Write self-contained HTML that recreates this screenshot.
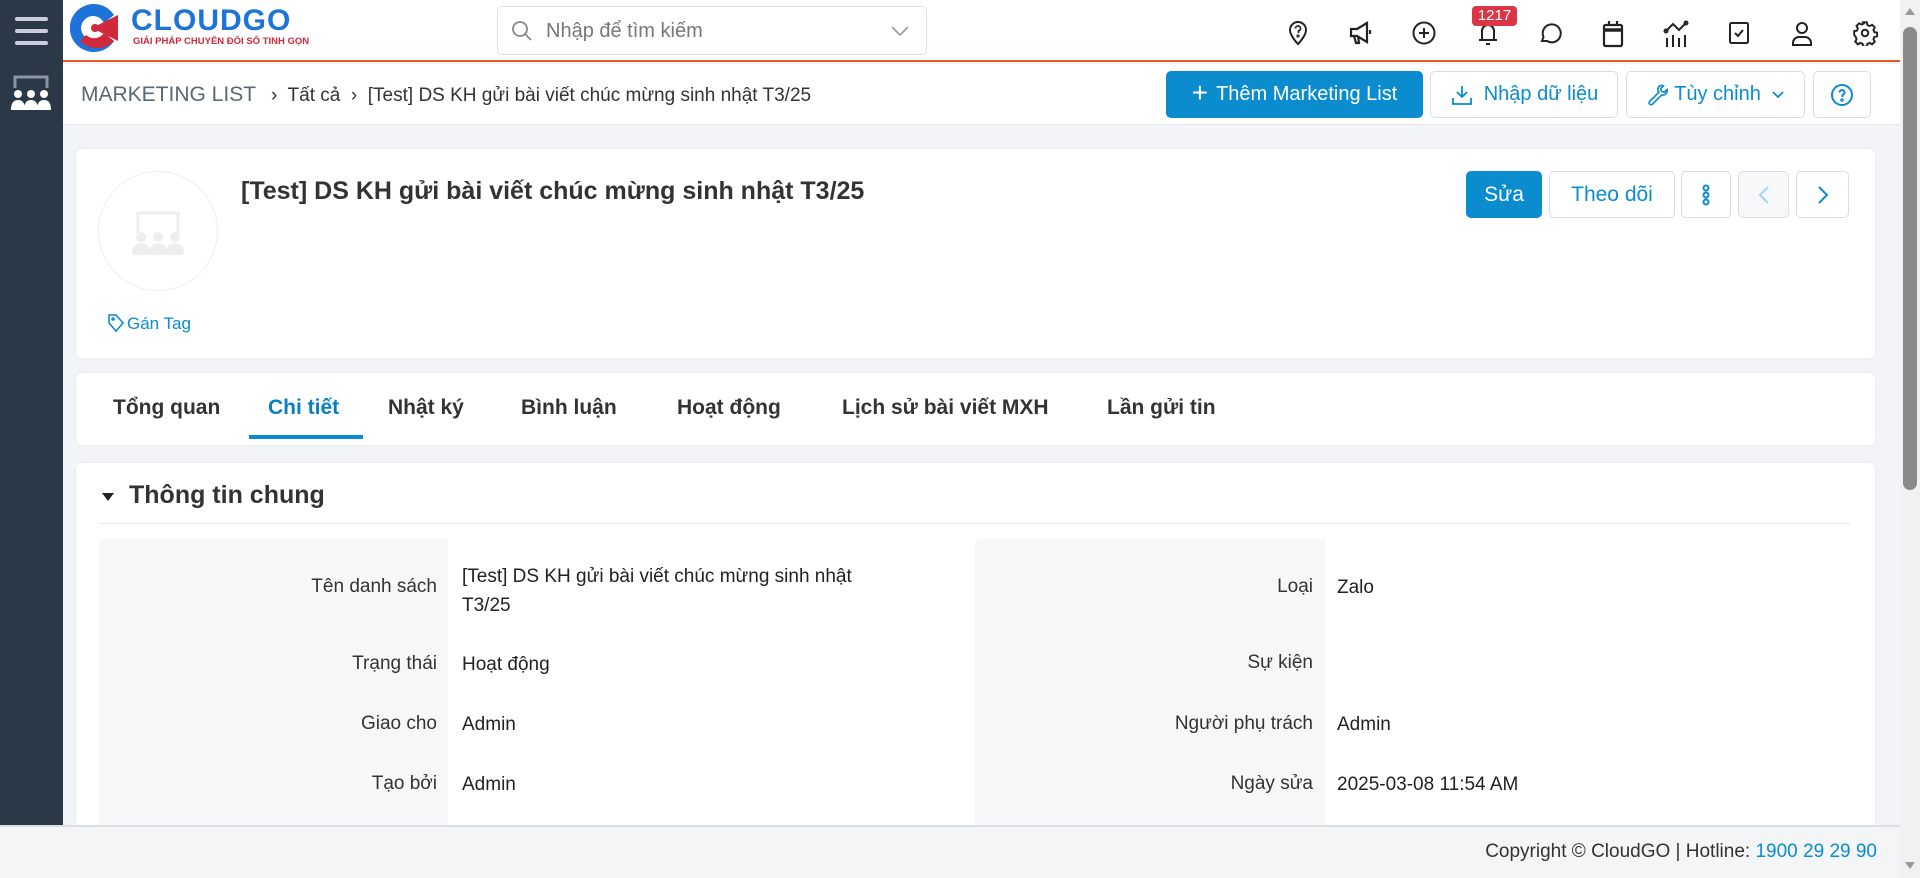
<!DOCTYPE html>
<html><head><meta charset="utf-8">
<style>
*{box-sizing:border-box;margin:0;padding:0}
body{width:1920px;height:878px;overflow:hidden;background:#f2f4f7;font-family:"Liberation Sans","Noto Sans CJK SC",sans-serif;color:#222;position:relative}
.abs{position:absolute}
#side{left:0;top:0;width:63px;height:825px;background:#2a3847}
#top{left:63px;top:0;width:1837px;height:62px;background:#fff;border-bottom:2px solid #e35b2a}
#bc{left:63px;top:64px;width:1837px;height:61px;background:#fff;border-bottom:1px solid #e4e7ea}
.btn{position:absolute;border:1px solid #d9dde1;border-radius:5px;background:#fff;color:#0a8ccf;font-size:20px;display:flex;align-items:center;justify-content:center}
.card{position:absolute;background:#fff;border-radius:6px;box-shadow:0 0 3px rgba(0,0,0,.06)}
.ic{position:absolute;top:20px}
.lbl{position:absolute;text-align:right;font-size:19px;color:#333}
.val{position:absolute;font-size:19px;color:#222}
.tab{position:absolute;top:396px;font-size:21px;font-weight:bold;color:#333}
#foot{left:0;top:825px;width:1900px;height:53px;background:#f4f5f6;border-top:2px solid #dcdfe2}
#sb{left:1900px;top:0;width:20px;height:878px;background:#f1f1f1}
</style></head><body>
<div id="side" class="abs">
 <div class="abs" style="left:15px;top:17px;width:33px;height:4px;background:#ccd;border-radius:2px"></div>
 <div class="abs" style="left:15px;top:29px;width:33px;height:4px;background:#ccd;border-radius:2px"></div>
 <div class="abs" style="left:15px;top:41px;width:33px;height:4px;background:#ccd;border-radius:2px"></div>
 <svg class="abs" style="left:9px;top:74px" width="44" height="38" viewBox="0 0 44 38"><path d="M6 14V3h32v11" fill="none" stroke="#8a96a3" stroke-width="3"/><g fill="#fff"><circle cx="9" cy="20" r="4"/><circle cx="22" cy="20" r="4"/><circle cx="35" cy="20" r="4"/><path d="M2 36q0-10 7-10t7 10zM15 36q0-10 7-10t7 10zM28 36q0-10 7-10t7 10z"/></g></svg>
</div>
<div id="top" class="abs">
 <svg class="abs" style="left:7px;top:3px" width="50" height="50" viewBox="0 0 50 50"><path d="M44 12A24 24 0 1 0 44 38L34 30A12 12 0 1 1 34 20Z" fill="#1e73d8"/><path d="M22 25L48 12V38Z" fill="#d0293a"/><path d="M10 38A24 24 0 0 0 44 38L34 30A12 12 0 0 1 16 32Z" fill="#d0293a"/><circle cx="25" cy="25" r="4" fill="#d0293a"/></svg>
 <div class="abs" style="left:68px;top:4px;font-size:30px;font-weight:bold;color:#1e73d8;letter-spacing:1px">CLOUDGO</div>
 <div class="abs" style="left:70px;top:36px;font-size:9.5px;font-weight:bold;color:#d0293a">GIẢI PHÁP CHUYỂN ĐỔI SỐ TINH GỌN</div>
 <div class="abs" style="left:434px;top:6px;width:430px;height:49px;border:1px solid #dde0e3;border-radius:5px">
  <svg class="abs" style="left:12px;top:12px" width="24" height="24" viewBox="0 0 24 24" fill="none" stroke="#888" stroke-width="1.8"><circle cx="10" cy="10" r="7"/><path d="M15 15l6 6"/></svg>
  <div class="abs" style="left:48px;top:13px;font-size:20px;color:#777">Nhập để tìm kiếm</div>
  <svg class="abs" style="left:392px;top:17px" width="20" height="14" viewBox="0 0 20 14" fill="none" stroke="#999" stroke-width="1.6"><path d="M2 3l8 8 8-8"/></svg>
 </div>
 <svg class="ic" style="left:1223px" width="24" height="26" viewBox="0 0 24 26" fill="none" stroke="#222" stroke-width="2"><path d="M12 24s-8-8-8-14a8 8 0 0 1 16 0c0 6-8 14-8 14z"/><path d="M9.5 8.5a2.5 2.5 0 1 1 3 2.4V13" stroke-width="1.7"/><circle cx="12" cy="16" r=".6"/></svg>
 <svg class="ic" style="left:1285px" width="26" height="26" viewBox="0 0 26 26" fill="none" stroke="#222" stroke-width="2.2"><path d="M3 9h6l10-6v19l-10-6H3z"/><path d="M6 16l2 7h3l-1-7"/><path d="M22 10v4"/></svg>
 <svg class="ic" style="left:1348px" width="26" height="26" viewBox="0 0 26 26" fill="none" stroke="#222" stroke-width="2"><circle cx="13" cy="13" r="10.5"/><path d="M13 8v10M8 13h10"/></svg>
 <svg class="ic" style="left:1412px" width="26" height="28" viewBox="0 0 26 28" fill="none" stroke="#222" stroke-width="2"><path d="M7 20V11a6 6 0 0 1 12 0v9M4 20h18"/><path d="M11 24h4"/></svg>
 <div class="abs" style="left:1409px;top:6px;width:45px;height:20px;background:#dc3545;border-radius:4px;color:#fff;font-size:15px;text-align:center;line-height:20px">1217</div>
 <svg class="ic" style="left:1474px" width="26" height="26" viewBox="0 0 26 26" fill="none" stroke="#222" stroke-width="2"><path d="M5 21l1.5-4A9 9 0 1 1 10 21z"/></svg>
 <svg class="ic" style="left:1538px" width="24" height="28" viewBox="0 0 24 28" fill="none" stroke="#222" stroke-width="2.2"><rect x="3" y="5" width="18" height="21" rx="1.5"/><path d="M3 10h18" stroke-width="3.5"/><path d="M8 1v5M16 1v5"/></svg>
 <svg class="ic" style="left:1600px" width="28" height="28" viewBox="0 0 28 28" fill="none" stroke="#222" stroke-width="2"><path d="M4 27v-9M10 27v-12M16 27v-9M22 27v-12"/><path d="M3 11l7-7 6 6 7-7"/><circle cx="3" cy="11" r="1.5"/><circle cx="23" cy="3" r="1.5"/></svg>
 <svg class="ic" style="left:1664px" width="24" height="26" viewBox="0 0 24 26" fill="none" stroke="#222" stroke-width="2"><rect x="3" y="3" width="18" height="20" rx="1.5"/><path d="M8 13l3 3 5-6"/></svg>
 <svg class="ic" style="left:1726px" width="26" height="28" viewBox="0 0 26 28" fill="none" stroke="#222" stroke-width="2"><circle cx="13" cy="8" r="5"/><path d="M4 25v-2a6 6 0 0 1 6-6h6a6 6 0 0 1 6 6v2z"/></svg>
 <svg class="ic" style="left:1789px" width="26" height="26" viewBox="0 0 24 24" fill="none" stroke="#222" stroke-width="1.8"><circle cx="12" cy="12" r="3"/><path d="M10.3 2h3.4l.5 2.6 2 1 2.4-1.2 2.4 2.4-1.2 2.4.8 2 2.6.5v3.4l-2.6.5-.8 2 1.2 2.4-2.4 2.4-2.4-1.2-2 .8-.5 2.6h-3.4l-.5-2.6-2-.8-2.4 1.2-2.4-2.4 1.2-2.4-.8-2L2 13.7v-3.4l2.6-.5.8-2-1.2-2.4 2.4-2.4 2.4 1.2 2-1z"/></svg>
</div>
<div id="bc" class="abs">
 <div class="abs" style="left:18px;top:19px;font-size:21px;color:#5b6873">MARKETING LIST</div>
 <div class="abs" style="left:208px;top:21px;font-size:19px;color:#333">›&nbsp; Tất cả &nbsp;›&nbsp; [Test] DS KH gửi bài viết chúc mừng sinh nhật T3/25</div>
 <div class="btn" style="left:1103px;top:7px;width:257px;height:47px;background:#0a8ccf;border-color:#0a8ccf;color:#fff"><span style="font-size:28px;font-weight:300;margin-right:8px;margin-top:-4px">+</span>Thêm Marketing List</div>
 <div class="btn" style="left:1367px;top:7px;width:188px;height:47px"><svg width="24" height="24" viewBox="0 0 24 24" fill="none" stroke="#0a8ccf" stroke-width="1.8" style="margin-right:10px"><path d="M12 3v11M7 9l5 5 5-5M3 15v6h18v-6"/></svg>Nhập dữ liệu</div>
 <div class="btn" style="left:1563px;top:7px;width:179px;height:47px"><svg width="22" height="22" viewBox="0 0 24 24" fill="none" stroke="#0a8ccf" stroke-width="1.8" style="margin-right:6px"><path d="M15 2a5 5 0 0 0-1 7l-10 10a2 2 0 0 0 3 3l10-10a5 5 0 0 0 6-6l-3 3-3-1-1-3 3-3a5 5 0 0 0-4 0z"/></svg>Tùy chỉnh<svg width="14" height="10" viewBox="0 0 14 10" fill="none" stroke="#0a8ccf" stroke-width="1.8" style="margin-left:10px"><path d="M2 2l5 5 5-5"/></svg></div>
 <div class="btn" style="left:1750px;top:7px;width:58px;height:47px"><svg width="24" height="24" viewBox="0 0 24 24" fill="none" stroke="#0a8ccf" stroke-width="2"><circle cx="12" cy="12" r="10"/><path d="M9.5 9.5a2.5 2.5 0 1 1 3 2.4V14"/><circle cx="12" cy="17" r=".8"/></svg></div>
</div>

<div class="card" style="left:76px;top:149px;width:1799px;height:209px">
 <div class="abs" style="left:22px;top:22px;width:120px;height:120px;border-radius:50%;border:1px solid #eee"></div>
 <svg class="abs" style="left:52px;top:58px" width="60" height="50" viewBox="0 0 60 50"><path d="M10 26V6h40v20" fill="none" stroke="#eee" stroke-width="3"/><g fill="#eee"><circle cx="13" cy="30" r="5"/><circle cx="30" cy="30" r="5"/><circle cx="47" cy="30" r="5"/><path d="M4 48q0-12 9-12t9 12zM21 48q0-12 9-12t9 12zM38 48q0-12 9-12t9 12z"/></g></svg>
 <svg class="abs" style="left:31px;top:164px" width="18" height="20" viewBox="0 0 18 20" fill="none" stroke="#0a8ccf" stroke-width="1.6"><path d="M2 2h7l7 8-7 8-7-8z"/><circle cx="6" cy="6" r="1"/></svg>
 <div class="abs" style="left:51px;top:165px;font-size:17px;color:#0a8ccf">Gán Tag</div>
 <div class="abs" style="left:165px;top:28px;font-size:25px;font-weight:bold;color:#333">[Test] DS KH gửi bài viết chúc mừng sinh nhật T3/25</div>
 <div class="btn" style="left:1390px;top:22px;width:76px;height:47px;background:#0a8ccf;border-color:#0a8ccf;color:#fff;font-size:21px">Sửa</div>
 <div class="btn" style="left:1473px;top:22px;width:126px;height:47px;font-size:21px">Theo dõi</div>
 <div class="btn" style="left:1605px;top:22px;width:50px;height:47px"><svg width="10" height="24" viewBox="0 0 10 24" fill="none" stroke="#0a8ccf" stroke-width="2"><circle cx="5" cy="5" r="2.5"/><circle cx="5" cy="12" r="2.5"/><circle cx="5" cy="19" r="2.5"/></svg></div>
 <div class="btn" style="left:1662px;top:22px;width:51px;height:47px;background:#f7f8f9"><svg width="14" height="20" viewBox="0 0 14 20" fill="none" stroke="#a7d3ee" stroke-width="2"><path d="M11 2L3 10l8 8"/></svg></div>
 <div class="btn" style="left:1720px;top:22px;width:53px;height:47px"><svg width="14" height="20" viewBox="0 0 14 20" fill="none" stroke="#0a8ccf" stroke-width="2"><path d="M3 2l8 8-8 8"/></svg></div>
</div>

<div class="card" style="left:76px;top:373px;width:1799px;height:72px"></div>
<div class="tab" style="left:113px">Tổng quan</div>
<div class="tab" style="left:268px;color:#0a7fbf">Chi tiết</div>
<div class="abs" style="left:249px;top:435px;width:114px;height:4px;background:#0a8ccf"></div>
<div class="tab" style="left:388px">Nhật ký</div>
<div class="tab" style="left:521px">Bình luận</div>
<div class="tab" style="left:677px">Hoạt động</div>
<div class="tab" style="left:842px">Lịch sử bài viết MXH</div>
<div class="tab" style="left:1107px">Lần gửi tin</div>

<div class="card" style="left:76px;top:463px;width:1799px;height:400px">
 <div class="abs" style="left:26px;top:30px;width:0;height:0;border-left:6px solid transparent;border-right:6px solid transparent;border-top:8px solid #222"></div>
 <div class="abs" style="left:53px;top:18px;font-size:25px;font-weight:bold;color:#333">Thông tin chung</div>
 <div class="abs" style="left:23px;top:60px;width:1752px;height:1px;background:#e5e7ea"></div>
 <div class="abs" style="left:23px;top:76px;width:349px;height:300px;background:#f6f7f9;border-radius:6px 0 0 0"></div>
 <div class="abs" style="left:899px;top:76px;width:350px;height:300px;background:#f6f7f9;border-radius:6px 0 0 0"></div>
</div>
<div class="lbl" style="left:100px;width:337px;top:576px">Tên danh sách</div>
<div class="val" style="left:462px;top:562px;width:420px;line-height:29px">[Test] DS KH gửi bài viết chúc mừng sinh nhật T3/25</div>
<div class="lbl" style="left:100px;width:337px;top:653px">Trạng thái</div>
<div class="val" style="left:462px;top:654px">Hoạt động</div>
<div class="lbl" style="left:100px;width:337px;top:713px">Giao cho</div>
<div class="val" style="left:462px;top:714px">Admin</div>
<div class="lbl" style="left:100px;width:337px;top:773px">Tạo bởi</div>
<div class="val" style="left:462px;top:774px">Admin</div>

<div class="lbl" style="left:976px;width:337px;top:576px">Loại</div>
<div class="val" style="left:1337px;top:577px">Zalo</div>
<div class="lbl" style="left:976px;width:337px;top:652px">Sự kiện</div>
<div class="lbl" style="left:976px;width:337px;top:713px">Người phụ trách</div>
<div class="val" style="left:1337px;top:714px">Admin</div>
<div class="lbl" style="left:976px;width:337px;top:773px">Ngày sửa</div>
<div class="val" style="left:1337px;top:774px">2025-03-08 11:54 AM</div>

<div id="foot" class="abs"><div class="abs" style="right:23px;top:14px;font-size:19px;color:#333">Copyright © CloudGO | Hotline: <span style="color:#0a8ccf">1900 29 29 90</span></div></div>
<div id="sb" class="abs">
 <div class="abs" style="left:5px;top:8px;width:0;height:0;border-left:5px solid transparent;border-right:5px solid transparent;border-bottom:7px solid #999"></div>
 <div class="abs" style="left:3px;top:27px;width:14px;height:463px;background:#8a8a8a;border-radius:7px"></div>
 <div class="abs" style="left:5px;top:862px;width:0;height:0;border-left:5px solid transparent;border-right:5px solid transparent;border-top:7px solid #999"></div>
</div>
</body></html>
